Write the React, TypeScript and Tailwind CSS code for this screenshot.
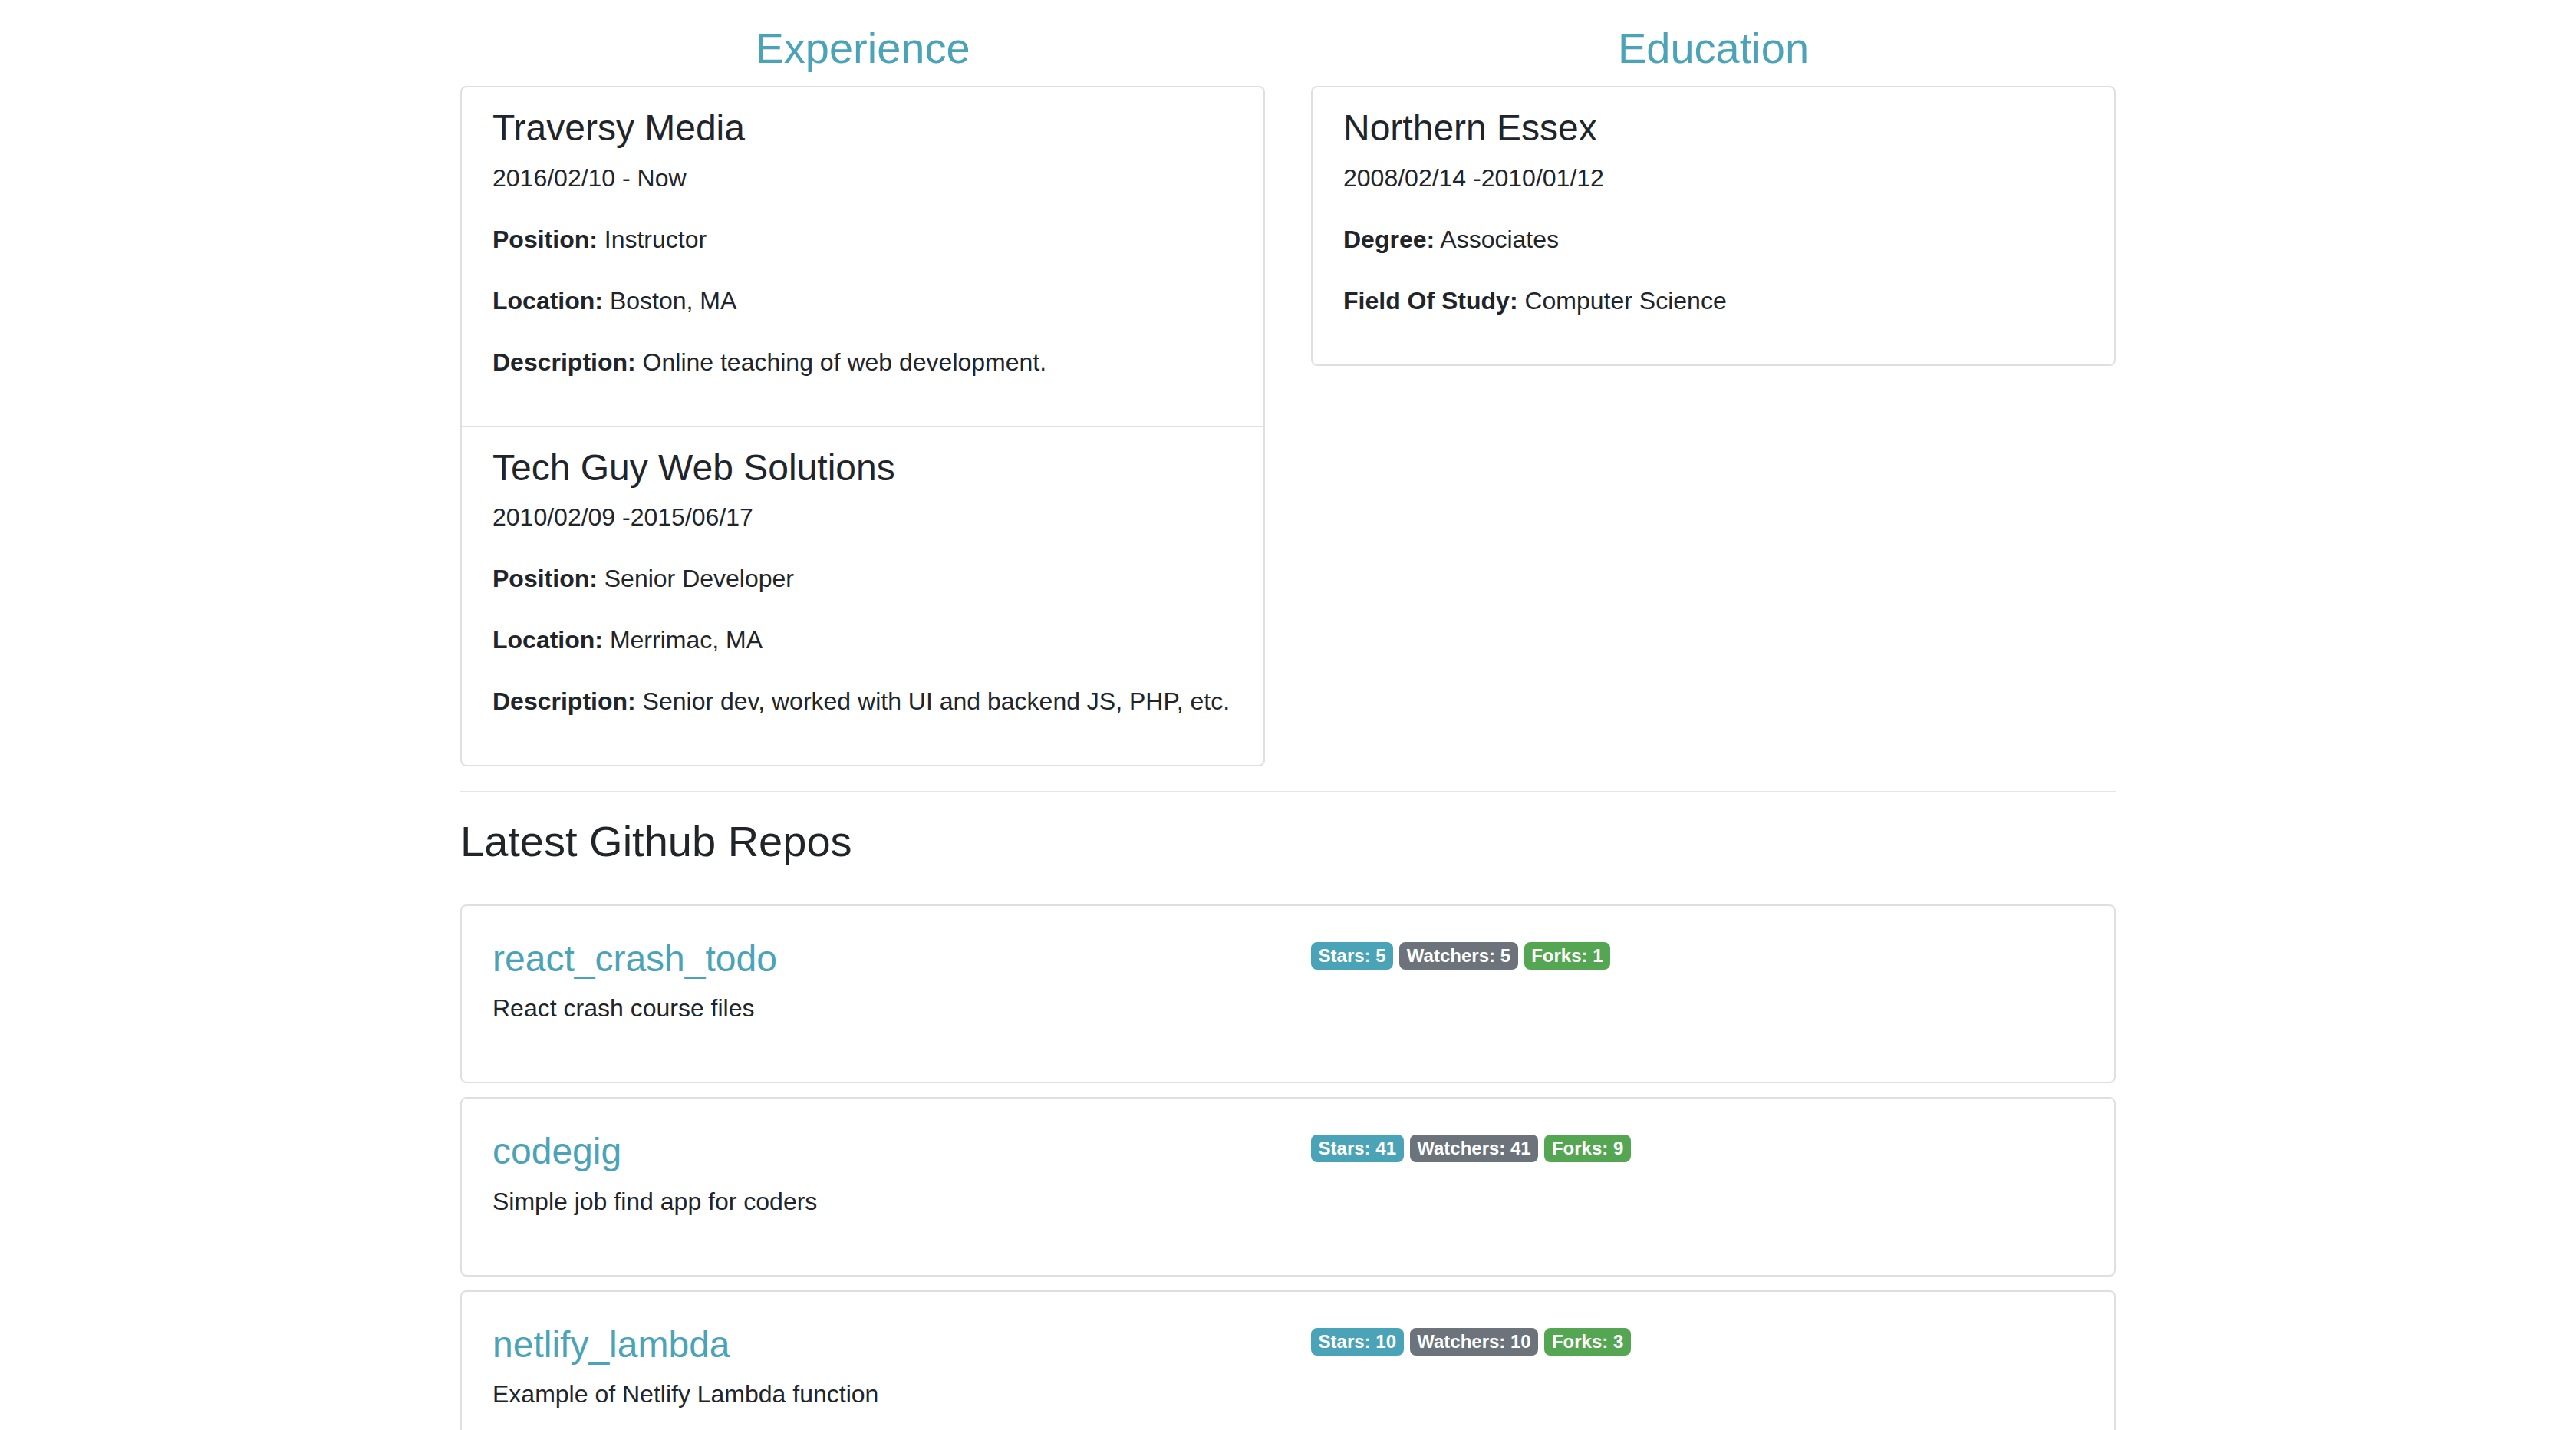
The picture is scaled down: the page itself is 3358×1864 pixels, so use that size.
import React from "react";
import clsx from "clsx";

type Experience = {
  company: string;
  from: string;
  to: string;
  title: string;
  location: string;
  description: string;
};

const experience: Experience[] = [
  {
    company: "Traversy Media",
    from: "2016/02/10",
    to: " - Now",
    title: "Instructor",
    location: "Boston, MA",
    description: "Online teaching of web development.",
  },
  {
    company: "Tech Guy Web Solutions",
    from: "2010/02/09",
    to: " -2015/06/17",
    title: "Senior Developer",
    location: "Merrimac, MA",
    description: "Senior dev, worked with UI and backend JS, PHP, etc.",
  },
];

const education = [
  {
    school: "Northern Essex",
    dates: "2008/02/14 -2010/01/12",
    degree: "Associates",
    field: "Computer Science",
  },
];

const repos = [
  { name: "react_crash_todo", description: "React crash course files", stars: 5, watchers: 5, forks: 1 },
  { name: "codegig", description: "Simple job find app for coders", stars: 41, watchers: 41, forks: 9 },
  { name: "netlify_lambda", description: "Example of Netlify Lambda function", stars: 10, watchers: 10, forks: 3 },
];

const Badge = ({ className, children }: { className: string; children: React.ReactNode }) => (
  <span
    className={clsx(
      "inline-block rounded-[8px] px-[9.6px] py-[6px] text-[24px] font-bold leading-none text-white",
      className
    )}
  >
    {children}
  </span>
);

const Field = ({ label, value }: { label: string; value: string }) => (
  <p className="mb-[32px]">
    <strong className="font-bold">{label}:</strong> {value}
  </p>
);

const App = () => {
  return (
    <div className="min-h-screen bg-white font-['Liberation_Sans',Arial,sans-serif] text-[32px] leading-[48px] text-[#212529]">
      <div className="mx-auto w-[2158px] pt-[29px]">
        {/* Experience / Education columns */}
        <div className="grid grid-cols-2 gap-x-[60px]">
          <div>
            <h3 className="mb-[16px] text-center text-[56px] leading-[1.2] text-[#4ba3b7]">Experience</h3>
            <ul className="rounded-[8px] border-2 border-[#dfdfdf]">
              {experience.map((exp, i) => (
                <li
                  key={exp.company}
                  className={clsx("px-[40px] pt-[24px] pb-[27px]", i > 0 && "border-t-2 border-[#dfdfdf]")}
                >
                  <h4 className="mb-[12px] text-[48px] leading-[1.2]">{exp.company}</h4>
                  <p className="mb-[32px]">
                    {exp.from}
                    {exp.to}
                  </p>
                  <Field label="Position" value={exp.title} />
                  <Field label="Location" value={exp.location} />
                  <Field label="Description" value={exp.description} />
                </li>
              ))}
            </ul>
          </div>

          <div>
            <h3 className="mb-[16px] text-center text-[56px] leading-[1.2] text-[#4ba3b7]">Education</h3>
            <ul className="rounded-[8px] border-2 border-[#dfdfdf]">
              {education.map((edu) => (
                <li key={edu.school} className="px-[40px] pt-[24px] pb-[27px]">
                  <h4 className="mb-[12px] text-[48px] leading-[1.2]">{edu.school}</h4>
                  <p className="mb-[32px]">{edu.dates}</p>
                  <Field label="Degree" value={edu.degree} />
                  <Field label="Field Of Study" value={edu.field} />
                </li>
              ))}
            </ul>
          </div>
        </div>

        <hr className="mt-[32px] mb-[30px] border-t-2 border-[#e6e6e6]" />

        {/* Github repos */}
        <h3 className="mb-[48px] text-[56px] leading-[1.2]">Latest Github Repos</h3>
        {repos.map((repo) => (
          <div key={repo.name} className="mb-[18px] rounded-[8px] border-2 border-[#dfdfdf] p-[40px]">
            <div className="grid grid-cols-2 gap-x-[60px]">
              <div>
                <h4 className="mb-[12px] text-[48px] leading-[1.2]">
                  <a href="#" className="text-[#4ba3b7]">
                    {repo.name}
                  </a>
                </h4>
                <p className="mb-[32px]">{repo.description}</p>
              </div>
              <div className="flex items-start gap-[8px] pt-[7px]">
                <Badge className="bg-[#4ba3b7]">Stars: {repo.stars}</Badge>
                <Badge className="bg-[#6c737b]">Watchers: {repo.watchers}</Badge>
                <Badge className="bg-[#55a653]">Forks: {repo.forks}</Badge>
              </div>
            </div>
          </div>
        ))}
      </div>
    </div>
  );
};

export default App;
